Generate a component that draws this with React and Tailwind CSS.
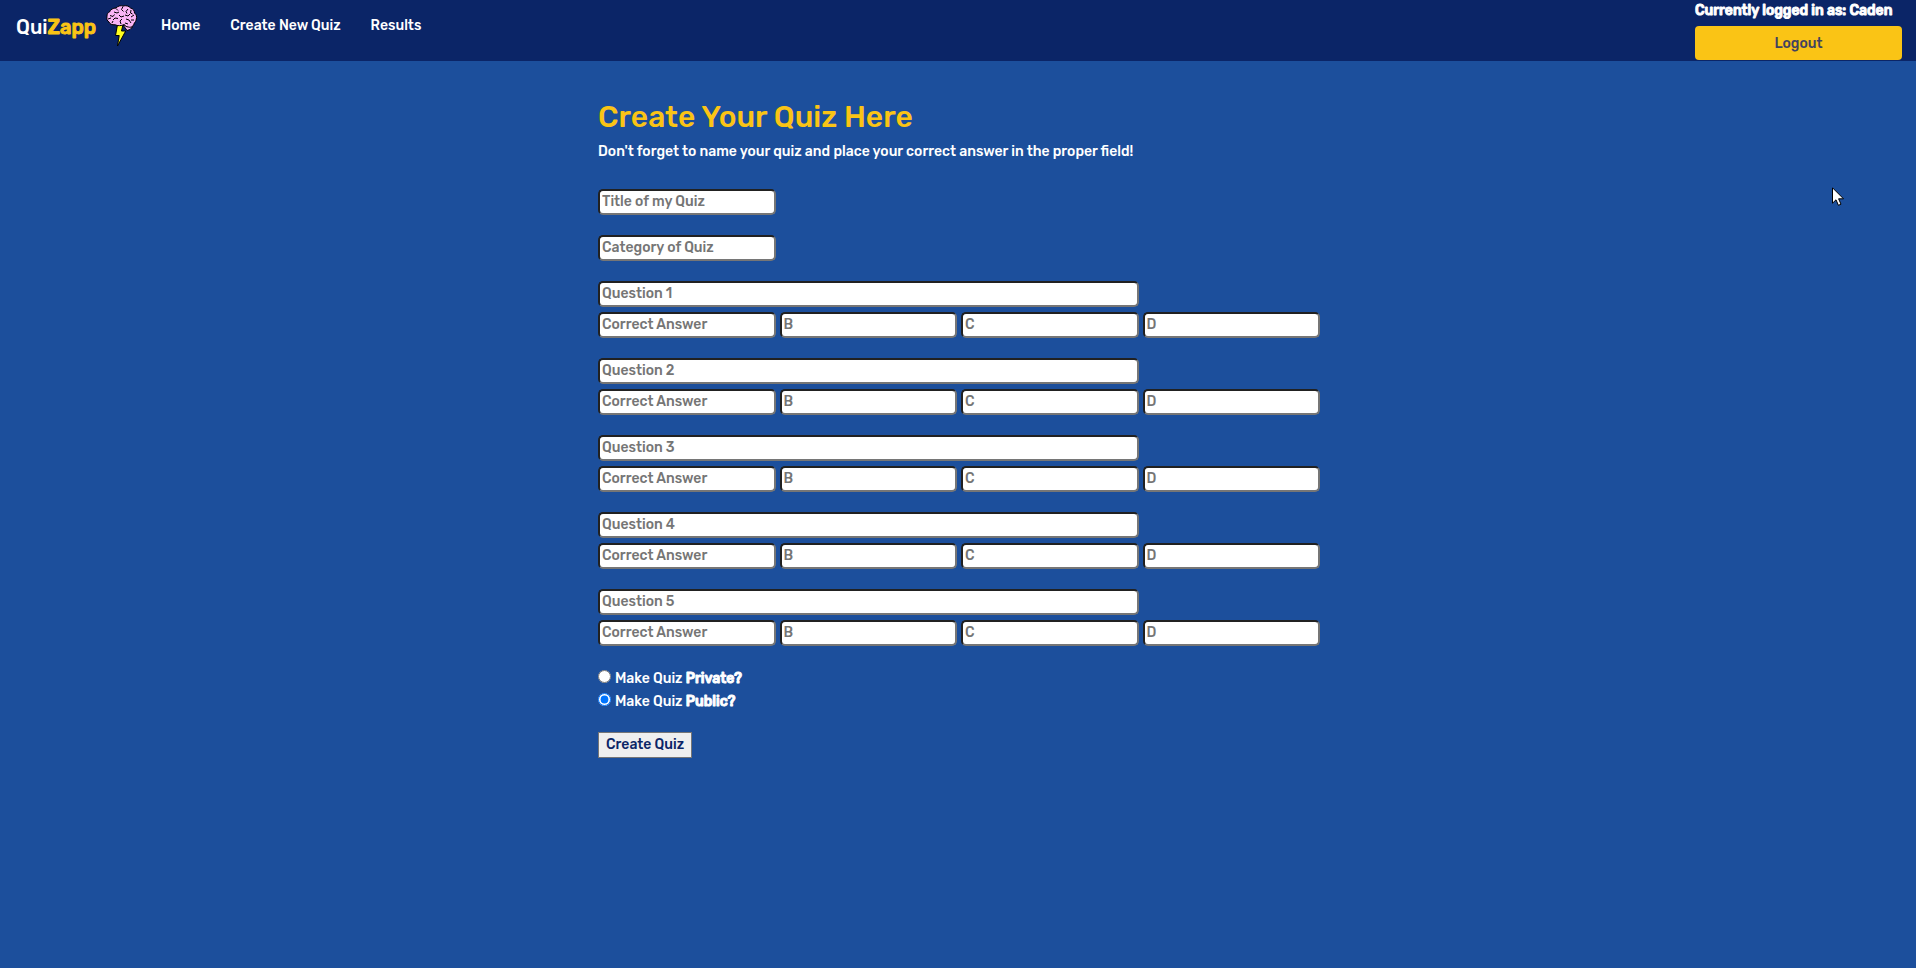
import React from "react";

const fieldClass =
  "block h-[26px] w-full min-w-0 rounded-[5px] border-2 border-t-[#212121] border-l-[#212121] border-r-[#767676] border-b-[#767676] bg-white px-0.5 pb-px text-sm leading-5 font-medium text-[#212121] placeholder:text-[#757575]";

function Field({ label, className = "" }) {
  return (
    <div className={className}>
      <input type="text" aria-label={label} placeholder={label} className={fieldClass} />
    </div>
  );
}

function Heavy({ children }) {
  return <b className="font-medium [-webkit-text-stroke:1px_currentColor]">{children}</b>;
}

function BrainLogo() {
  return (
    <svg aria-hidden="true" viewBox="0 0 32 42" className="h-[42px] w-8 shrink-0">
      <path d="M11.500 19.500h5.500l-1.500 6.500h4.200l-8.200 15 1.700-10.500h-3.700z" fill="#ffff1f" stroke="#000" strokeWidth="1" />
      <path d="M17 20l3 4 1 1.500 3-1 2.500-2.500z" fill="#f9b5f5" stroke="#000" strokeWidth="1" />
      <path
        d="M10 3C12 .8 15 .3 17 1c3-.8 6 0 7.500 2 2.500.5 4 2.500 4 5 2 1.500 2.500 4 1.800 6-.3 2-1 3-2 4-.5 3-3 5-6 4-2-.3-3.300-1-4-2.500-3 1.500-7 1.500-9 .3C6 20 3.500 19 3 17 1 16 .5 13.500 1 11.500.8 9 2 7.500 3.500 7 4.500 4.500 7 3 10 3z"
        fill="#f9b5f5"
        stroke="#000"
        strokeWidth="1"
      />
      <path
        d="M10 3.500l2 2M8 7l3 1 2-1M17 1.500l-1.500 3 2 2M22 4l-2 2.500 1 2M4 10.500l3 1 1.500-2M2 14l3-1M7 15l2-2 3 .5M6 18l1-2M13 10l2 2 3-1M16 14l-2 2 1 3M19 10l3 1 2-2M25 5l-.5 3 2 1M28 10l-3 2M20 14l3 1 2 3M28 15l-3 0M19 18l3 1"
        fill="none"
        stroke="#000"
        strokeWidth="1"
      />
    </svg>
  );
}

function Pointer() {
  return (
    <svg aria-hidden="true" viewBox="0 0 12 19" className="pointer-events-none absolute top-[187px] right-[72px] h-[19px] w-3">
      <path d="M.5.8v15.400l3.500-3.400 2.400 5.500 2.600-1.100-2.400-5.400h4.900z" fill="#fff" stroke="#000" strokeWidth="1" />
    </svg>
  );
}

function Header() {
  return (
    <header className="flex h-[61px] items-start justify-between bg-[#0b2567] pr-3.5 pl-4">
      <div className="flex items-center">
        <a href="#home" className="flex h-[51px] items-center gap-2.5 text-[20px] leading-6 font-medium text-white">
          <span className="pt-0.5">
            Qui
            <span className="text-[#fac415]">
              <Heavy>Zapp</Heavy>
            </span>
          </span>
          <BrainLogo />
        </a>
        <nav className="ml-[23px] flex gap-[30px] text-sm leading-5 font-medium text-white">
          <a href="#home">Home</a>
          <a href="#create">Create New Quiz</a>
          <a href="#results">Results</a>
        </nav>
      </div>
      <div className="w-[207px] pt-px text-sm leading-5 text-white">
        <p className="whitespace-nowrap">
          <Heavy>Currently logged in as: Caden</Heavy>
        </p>
        <button type="button" className="mt-[5px] block h-[34px] w-full rounded-[4px] bg-[#fac415] pt-0.5 text-sm leading-5 font-medium text-[#414260]">
          Logout
        </button>
      </div>
    </header>
  );
}

export default function App() {
  return (
    <div className="relative min-h-screen bg-[#1c4f9c] font-['Rubik','Roboto',sans-serif] text-white">
      <Header />
      <main className="mx-auto w-full max-w-[724px] pt-9 pl-0.5">
        <h1 className="text-3xl leading-10 font-medium text-[#fac415]">Create Your Quiz Here</h1>
        <p className="mt-[5px] text-sm leading-5 font-medium">
          Don't forget to name your quiz and place your correct answer in the proper field!
        </p>
        <form className="mt-[27px] text-sm leading-5 font-medium">
          <div className="grid grid-cols-4 gap-x-1 gap-y-5">
            <Field label="Title of my Quiz" />
            <Field label="Category of Quiz" className="col-start-1" />
          </div>
          {[1, 2, 3, 4, 5].map((n) => (
            <fieldset key={n} aria-label={`Question ${n}`} className="mt-5 grid grid-cols-4 gap-x-1 gap-y-[5px]">
              <Field label={`Question ${n}`} className="col-span-3" />
              <Field label="Correct Answer" className="col-start-1" />
              <Field label="B" />
              <Field label="C" />
              <Field label="D" />
            </fieldset>
          ))}
          <div className="mt-5 flex flex-col items-start">
            <label className="flex gap-1">
              <input type="radio" name="visibility" className="mt-1 size-[13px]" />
              <span className="pt-[3px]">
                Make Quiz <Heavy>Private?</Heavy>
              </span>
            </label>
            <label className="flex gap-1">
              <input type="radio" name="visibility" defaultChecked className="mt-1 size-[13px]" />
              <span className="pt-[3px]">
                Make Quiz <Heavy>Public?</Heavy>
              </span>
            </label>
          </div>
          <button type="button" className="mt-5 h-[26px] border border-[#767676] bg-[#efefef] px-[7px] text-sm leading-5 font-medium text-[#0b2567]">
            Create Quiz
          </button>
        </form>
      </main>
      <Pointer />
    </div>
  );
}
